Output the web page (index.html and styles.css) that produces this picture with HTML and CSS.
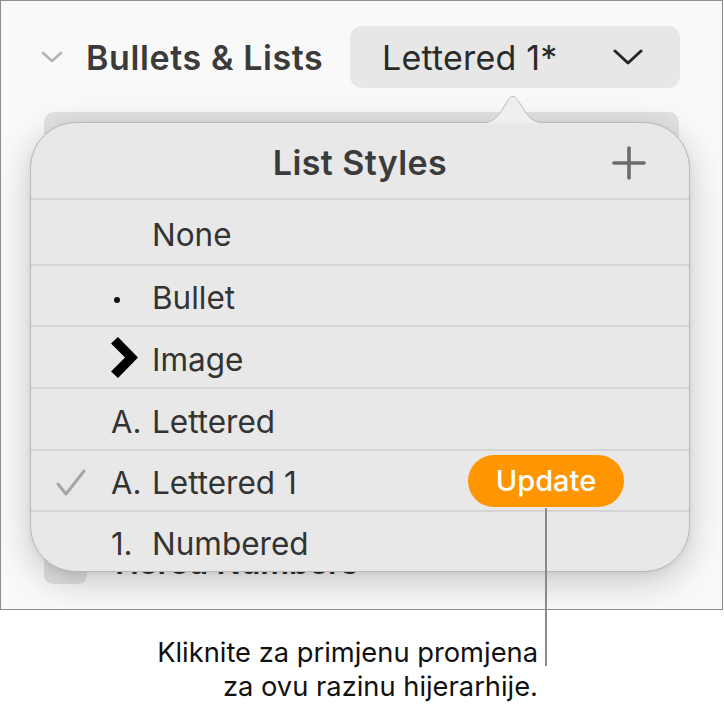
FILE: index.html
```html
<!DOCTYPE html>
<html lang="hr">
<head>
<meta charset="utf-8">
<title>List Styles</title>
<link rel="stylesheet" href="styles.css">
</head>
<body>
<div class="page">
  <div class="frame">
    <div class="inspector-head">
      <svg class="disclosure" viewBox="0 0 22 12" width="22" height="12"><path d="M2 2 L11 10 L20 2" fill="none" stroke="#b3b3b3" stroke-width="2.6" stroke-linecap="round" stroke-linejoin="round"/></svg>
      <h2 class="section-title">Bullets &amp; Lists</h2>
      <div class="style-popup">
        <span class="popup-label">Lettered 1*</span>
        <svg class="popup-chevron" viewBox="0 0 30 16" width="30" height="16"><path d="M2 2 L15 14 L28 2" fill="none" stroke="#262626" stroke-width="3" stroke-linecap="round" stroke-linejoin="round"/></svg>
      </div>
    </div>
    <div class="backdrop">
      <div class="bd-panel"></div>
      <div class="bd-row"><span class="bd-check"></span><span class="bd-label">Tiered Numbers</span></div>
    </div>

    <svg class="popover-arrow" viewBox="0 0 72 31" width="72" height="31"><path d="M0 30.5 C12 30.5 18 27.5 24 18.5 L31.5 6.5 C34 2.5 38 2.5 40.5 6.5 L48 18.5 C54 27.5 60 30.5 72 30.5" fill="#efefef" stroke="#bcbcbc" stroke-width="1"/><rect x="0" y="30" width="72" height="1" fill="#ebebeb"/></svg>
    <div class="popover">
      <div class="pop-head">
        <span></span>
        <h3 class="pop-title">List Styles</h3>
        <svg class="plus" viewBox="0 0 34 34" width="34" height="34"><path d="M17 2 V32 M2 17 H32" stroke="#6b6b6b" stroke-width="3.6" stroke-linecap="round"/></svg>
      </div>
      <div class="row row-first"><span class="check"></span><span class="marker"></span><span class="name">None</span></div>
      <div class="row row-short"><span class="check"></span><span class="marker"><span class="dot"></span></span><span class="name">Bullet</span></div>
      <div class="row"><span class="check"></span><span class="marker"><svg class="img-bullet" viewBox="0 0 28 42" width="28" height="42"><path d="M7 0 L27 20.5 L7 41 L0 34.5 L14 20.5 L0 6.5 Z" fill="#000"/></svg></span><span class="name">Image</span></div>
      <div class="row"><span class="check"></span><span class="marker letter">A.</span><span class="name">Lettered</span></div>
      <div class="row row-short"><span class="check"><svg viewBox="0 0 30 28" width="30" height="28"><path d="M2 15 L10 25 L28 2" fill="none" stroke="#a6a6a6" stroke-width="3" stroke-linecap="round" stroke-linejoin="round"/></svg></span><span class="marker letter">A.</span><span class="name">Lettered 1</span><span class="update">Update</span></div>
      <div class="row row-last"><span class="check"></span><span class="marker letter">1.</span><span class="name">Numbered</span></div>
    </div>
  </div>
  <div class="callout-line"></div>
  <p class="callout-text">Kliknite za primjenu promjena<br>za ovu razinu hijerarhije.</p>
</div>
</body>
</html>
```

FILE: styles.css
```css
* { box-sizing: border-box; }
html, body { margin: 0; padding: 0; background: #ffffff; }
body { font-family: "Inter", "Liberation Sans", sans-serif; color: #333; }

.page { position: relative; width: 724px; height: 708px; }

.frame {
  position: relative;
  width: 723px;
  height: 610px;
  border: 1px solid #8d8d8d;
  background: #f9f9f9;
  padding-top: 25px;
  overflow: hidden;
}

.inspector-head {
  display: flex;
  align-items: center;
  height: 62px;
}
.disclosure { margin-left: 40px; flex: none; }
.section-title {
  margin: 0 0 0 23px;
  font-size: 34px;
  font-weight: 600;
  color: #3b3b3b;
  letter-spacing: 0.6px;
}
.style-popup {
  margin-left: auto;
  margin-right: 42px;
  width: 330px;
  height: 62px;
  border-radius: 12px;
  background: #e7e7e7;
  display: flex;
  align-items: center;
  padding-left: 32px;
  padding-right: 37px;
}
.popup-label { font-size: 34px; color: #2a2a2a; letter-spacing: 0.2px; }
.popup-chevron { margin-left: auto; }

.backdrop { margin-top: 24px; }
.bd-panel {
  margin-left: 43px;
  width: 635px;
  height: 408px;
  border-radius: 10px;
  background: #e2e2e2;
}
.bd-row {
  display: flex;
  align-items: center;
  margin-top: 21px;
  margin-left: 43px;
  gap: 22px;
}
.bd-check {
  width: 43px;
  height: 43px;
  border-radius: 9px;
  background: #e0e0e0;
}
.bd-label { font-size: 32px; font-weight: 600; color: #2e2e2e; }

.popover-arrow {
  position: absolute;
  left: 476px;
  top: 92px;
  z-index: 3;
}
.popover {
  position: absolute;
  left: 29px;
  top: 121px;
  width: 660px;
  height: 450px;
  border: 1px solid #b8b8b8;
  border-radius: 46px;
  background: #e8e8e8;
  box-shadow: 0 10px 36px rgba(0, 0, 0, 0.2), 0 2px 6px rgba(0, 0, 0, 0.06);
  overflow: hidden;
  z-index: 2;
}
.pop-head {
  height: 75px;
  display: grid;
  grid-template-columns: 1fr auto 1fr;
  align-items: center;
  padding: 4px 43px 0 43px;
}
.pop-title {
  margin: 0;
  font-size: 34px;
  font-weight: 600;
  color: #3b3b3b;
  letter-spacing: 0.4px;
}
.plus { justify-self: end; }

.row {
  display: grid;
  grid-template-columns: 80px 41px 1fr auto;
  align-items: center;
  height: 62px;
  border-top: 2px solid #d4d4d4;
  padding-top: 4px;
  padding-right: 65px;
}
.row-first { height: 66px; padding-top: 4px; }
.row-short { height: 61px; }
.row-last { height: 61px; }
.check { display: flex; padding-left: 25px; }
.marker { display: flex; align-items: center; }
.dot { width: 6px; height: 6px; border-radius: 50%; background: #111; margin-left: 3px; margin-top: 4px; }
.img-bullet { margin-top: -2px; }
.letter { font-size: 31px; color: #333; }
.name { font-size: 31.5px; color: #333; }
.update {
  width: 156px;
  height: 52px;
  border-radius: 26px;
  background: #ff9500;
  color: #fff;
  font-size: 29px;
  font-weight: 500;
  display: flex;
  align-items: center;
  justify-content: center;
  margin-top: -4px;
}

.callout-line {
  position: absolute;
  left: 545px;
  top: 508px;
  width: 2px;
  height: 158px;
  background: #8a8a8a;
  z-index: 5;
}
.callout-text {
  margin: 26px 0 0 0;
  padding-right: 186px;
  text-align: right;
  font-size: 27.3px;
  line-height: 34px;
  color: #111;
}
```
